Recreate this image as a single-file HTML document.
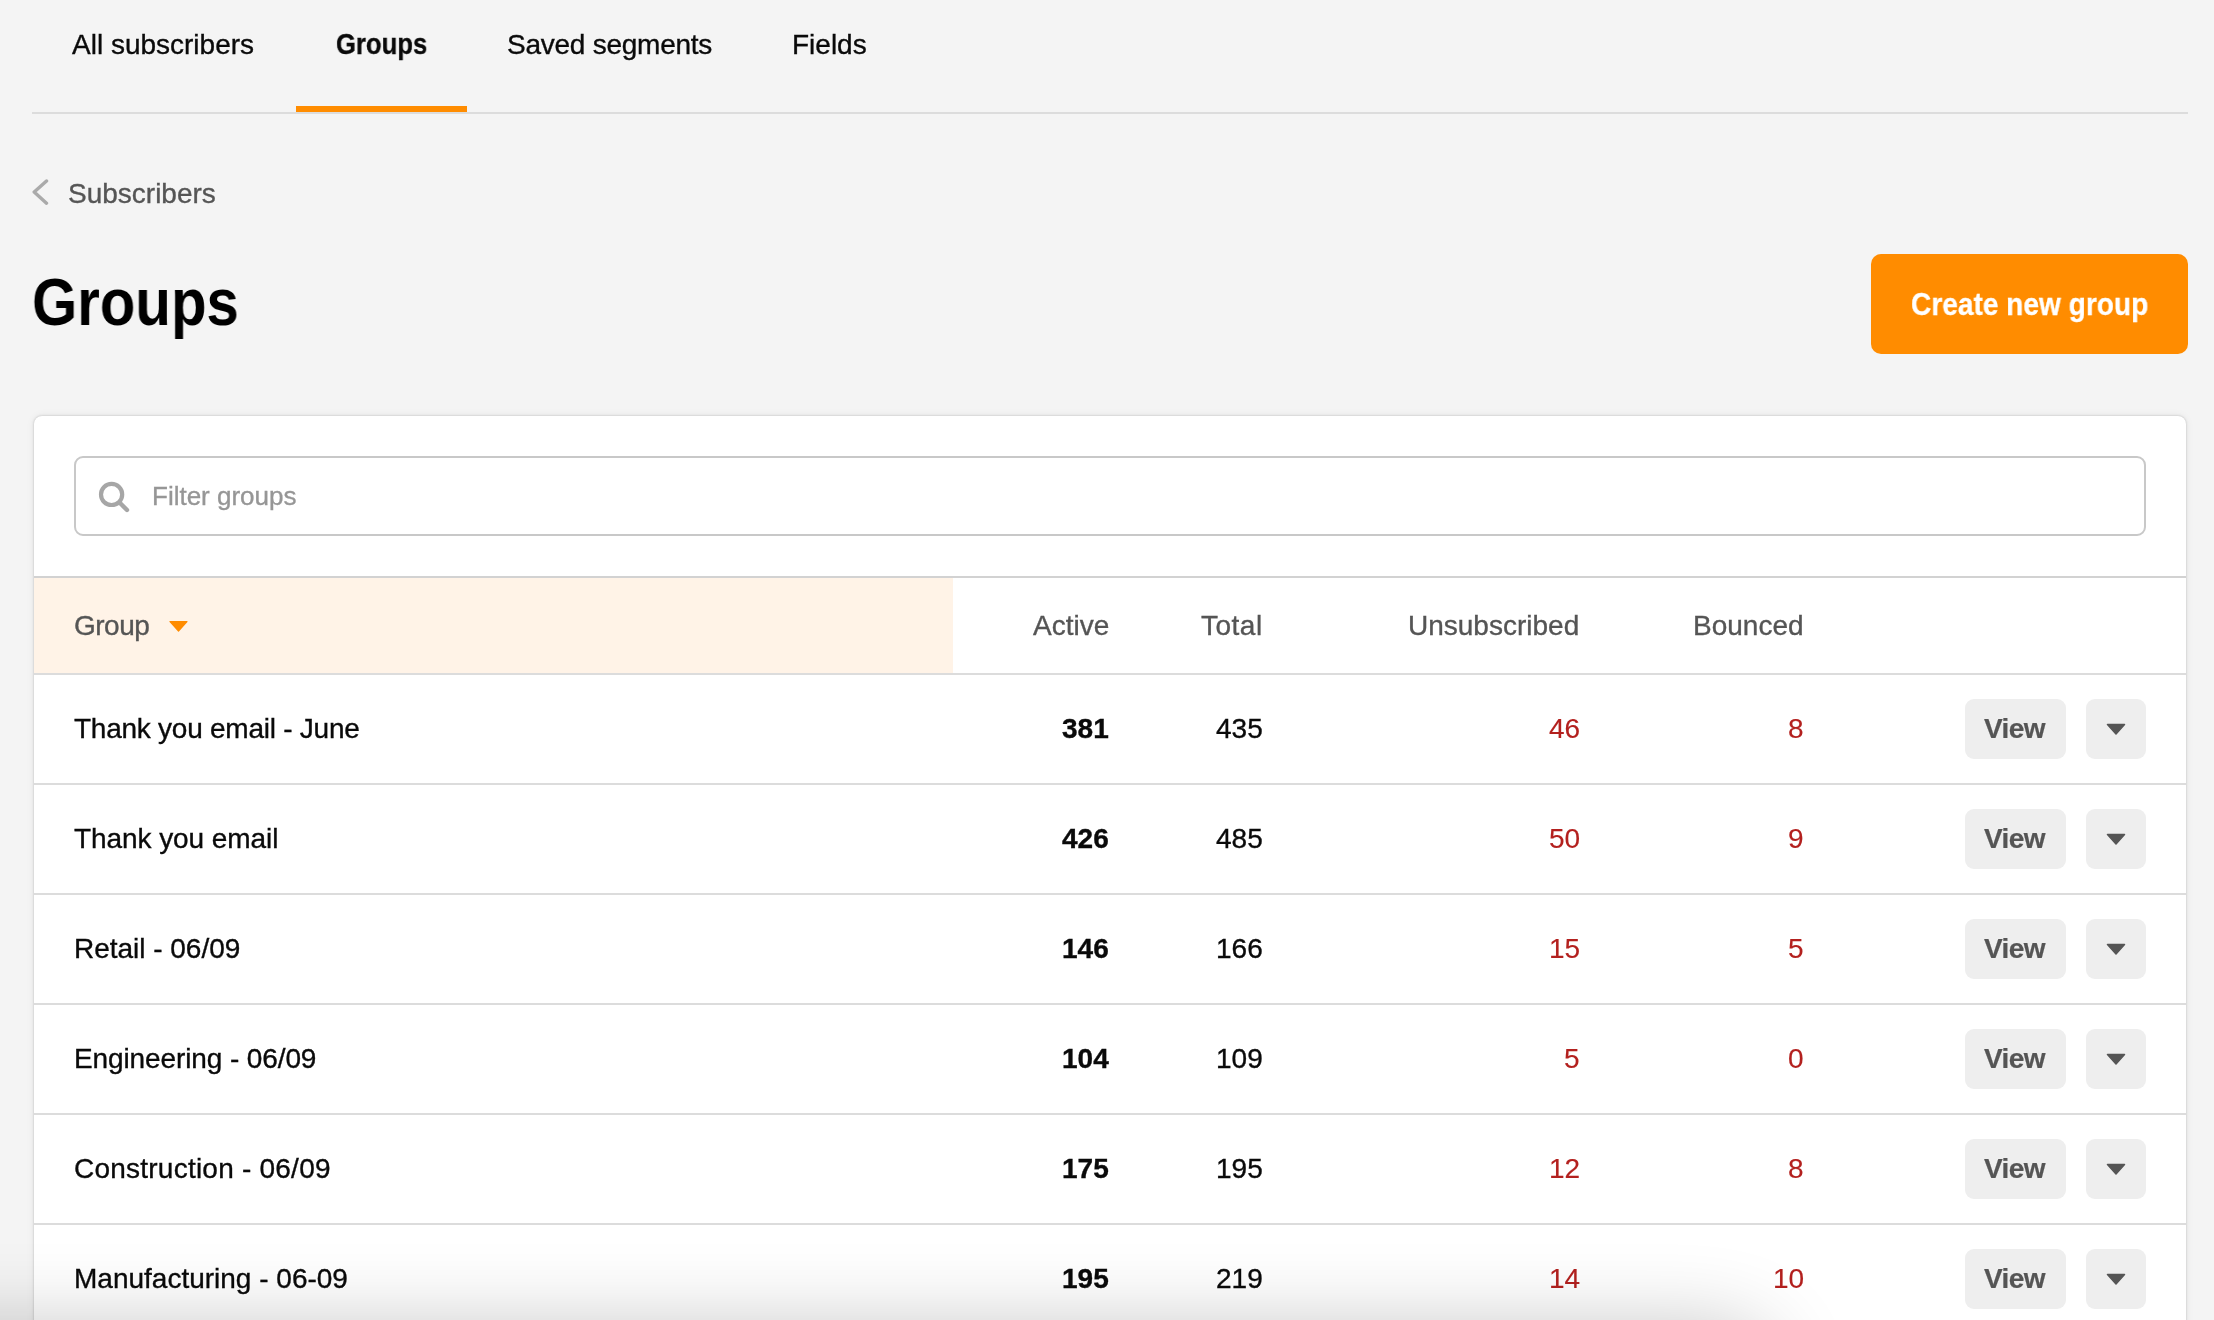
<!DOCTYPE html>
<html>
<head>
<meta charset="utf-8">
<style>
html,body{margin:0;padding:0;}
body{width:2214px;height:1320px;overflow:hidden;background:#f4f4f4;position:relative;font-family:"Liberation Sans",sans-serif;color:#0a0a0a;}
.a{position:absolute;white-space:nowrap;line-height:28px;font-size:28px;will-change:transform;-webkit-text-stroke:0.35px currentColor;}
.tab{top:31px;color:#0a0a0a;}
.line{position:absolute;left:32px;width:2156px;top:112px;height:2px;background:#dcdcdc;}
.bar{position:absolute;left:296px;width:171px;top:106px;height:6px;background:#ff8c00;}
.crumb{top:180px;left:68px;color:#555;}
h1{position:absolute;margin:0;left:32px;top:269px;font-size:66px;line-height:66px;font-weight:bold;color:#000;will-change:transform;transform:scaleX(0.881);transform-origin:0 0;}
.btn{position:absolute;left:1871px;top:254px;width:317px;height:100px;background:#ff8c00;border-radius:10px;color:#fff;font-weight:bold;font-size:30px;}
.btn span{will-change:transform;-webkit-text-stroke:0.3px #fff;position:absolute;left:40px;top:35px;line-height:31px;font-size:31px;transform:scaleX(0.906);transform-origin:0 0;}
.card{position:absolute;left:34px;top:416px;width:2152px;height:1000px;background:#fff;border-radius:8px;box-shadow:0 0 2px rgba(0,0,0,0.2),0 0 4px rgba(0,0,0,0.06),0 0 10px rgba(0,0,0,0.06);}
.search{position:absolute;left:74px;top:456px;width:2068px;height:76px;border:2px solid #c8c8c8;border-radius:9px;background:#fff;}
.ph{top:483px;left:152px;color:#969696;font-size:26px;line-height:26px;}
.hdr{position:absolute;left:34px;top:576px;width:2152px;height:2px;background:#d2d2d2;}
.hbg{position:absolute;left:34px;top:578px;width:919px;height:95px;background:#fff3e7;}
.sep{position:absolute;left:34px;width:2152px;height:2px;background:#dcdcdc;}
.th{color:#555;top:612px;}
.r{text-align:right;}
.num{font-weight:bold;color:#0a0a0a;}
.red{color:#b3201e;-webkit-text-stroke:0.15px currentColor;}
.vbtn{position:absolute;left:1965px;width:101px;height:60px;background:#eeeeee;border-radius:9px;}
.vbtn span{will-change:transform;-webkit-text-stroke:0.2px currentColor;position:absolute;left:19px;top:16px;font-size:28px;line-height:28px;font-weight:bold;color:#555;letter-spacing:-0.6px;}
.dbtn{position:absolute;left:2086px;width:60px;height:60px;background:#eeeeee;border-radius:9px;}
.dbtn svg{position:absolute;left:20px;top:24px;}
.shade{position:absolute;left:-300px;top:1338px;width:2060px;height:300px;border-radius:40px;background:#000;box-shadow:0 0 84px 10px rgba(0,0,0,0.24);pointer-events:none;}
</style>
</head>
<body>
<div class="a tab" style="left:72px;">All subscribers</div>
<div class="a tab" style="left:336px;top:30px;font-size:29px;font-weight:bold;transform:scaleX(0.885);transform-origin:0 0;">Groups</div>
<div class="a tab" style="left:507px;letter-spacing:-0.25px;">Saved segments</div>
<div class="a tab" style="left:792px;">Fields</div>
<div class="line"></div>
<div class="bar"></div>

<svg style="position:absolute;left:32px;top:178px;" width="18" height="28" viewBox="0 0 18 28"><path d="M14.5 3 L2.2 14 L14.5 25.2" fill="none" stroke="#aaa" stroke-width="3.4" stroke-linecap="round" stroke-linejoin="round"/></svg>
<div class="a crumb">Subscribers</div>

<h1>Groups</h1>
<div class="btn"><span>Create new group</span></div>

<div class="card"></div>
<div class="search"></div>
<svg style="position:absolute;left:96px;top:479px;" width="36" height="36" viewBox="0 0 36 36"><circle cx="15.6" cy="15.4" r="10.6" fill="none" stroke="#a6a6a6" stroke-width="4.2"/><path d="M23.5 23.5 L31 31" stroke="#a6a6a6" stroke-width="4.4" stroke-linecap="round"/></svg>
<div class="a ph">Filter groups</div>

<div class="hdr"></div>
<div class="hbg"></div>
<div class="a th" style="left:74px;letter-spacing:-0.5px;">Group</div>
<svg style="position:absolute;left:169px;top:620px;" width="20" height="12" viewBox="0 0 20 12"><path d="M1 1.5 L18 1.5 L9.5 11 Z" fill="#ff8c00" stroke="#ff8c00" stroke-width="1.2" stroke-linejoin="round"/></svg>
<div class="a th r" style="right:1105px;">Active</div>
<div class="a th r" style="right:951px;letter-spacing:0.5px;">Total</div>
<div class="a th r" style="right:635px;">Unsubscribed</div>
<div class="a th r" style="right:410px;">Bounced</div>
<div class="sep" style="top:673px;"></div>

<div class="a" style="left:74px;top:715px;letter-spacing:-0.25px;">Thank you email - June</div>
<div class="a r num" style="right:1105px;top:715px;">381</div>
<div class="a r" style="right:951px;top:715px;">435</div>
<div class="a r red" style="right:634px;top:715px;">46</div>
<div class="a r red" style="right:410px;top:715px;">8</div>
<div class="vbtn" style="top:699px;"><span>View</span></div>
<div class="dbtn" style="top:699px;"><svg width="20" height="12" viewBox="0 0 20 12"><path d="M1.5 1.5 L18.5 1.5 L10 11 Z" fill="#555" stroke="#555" stroke-width="1.5" stroke-linejoin="round"/></svg></div>
<div class="sep" style="top:783px;"></div>
<div class="a" style="left:74px;top:825px;letter-spacing:-0.07px;">Thank you email</div>
<div class="a r num" style="right:1105px;top:825px;">426</div>
<div class="a r" style="right:951px;top:825px;">485</div>
<div class="a r red" style="right:634px;top:825px;">50</div>
<div class="a r red" style="right:410px;top:825px;">9</div>
<div class="vbtn" style="top:809px;"><span>View</span></div>
<div class="dbtn" style="top:809px;"><svg width="20" height="12" viewBox="0 0 20 12"><path d="M1.5 1.5 L18.5 1.5 L10 11 Z" fill="#555" stroke="#555" stroke-width="1.5" stroke-linejoin="round"/></svg></div>
<div class="sep" style="top:893px;"></div>
<div class="a" style="left:74px;top:935px;letter-spacing:-0.02px;">Retail - 06/09</div>
<div class="a r num" style="right:1105px;top:935px;">146</div>
<div class="a r" style="right:951px;top:935px;">166</div>
<div class="a r red" style="right:634px;top:935px;">15</div>
<div class="a r red" style="right:410px;top:935px;">5</div>
<div class="vbtn" style="top:919px;"><span>View</span></div>
<div class="dbtn" style="top:919px;"><svg width="20" height="12" viewBox="0 0 20 12"><path d="M1.5 1.5 L18.5 1.5 L10 11 Z" fill="#555" stroke="#555" stroke-width="1.5" stroke-linejoin="round"/></svg></div>
<div class="sep" style="top:1003px;"></div>
<div class="a" style="left:74px;top:1045px;letter-spacing:-0.11px;">Engineering - 06/09</div>
<div class="a r num" style="right:1105px;top:1045px;">104</div>
<div class="a r" style="right:951px;top:1045px;">109</div>
<div class="a r red" style="right:634px;top:1045px;">5</div>
<div class="a r red" style="right:410px;top:1045px;">0</div>
<div class="vbtn" style="top:1029px;"><span>View</span></div>
<div class="dbtn" style="top:1029px;"><svg width="20" height="12" viewBox="0 0 20 12"><path d="M1.5 1.5 L18.5 1.5 L10 11 Z" fill="#555" stroke="#555" stroke-width="1.5" stroke-linejoin="round"/></svg></div>
<div class="sep" style="top:1113px;"></div>
<div class="a" style="left:74px;top:1155px;letter-spacing:0.23px;">Construction - 06/09</div>
<div class="a r num" style="right:1105px;top:1155px;">175</div>
<div class="a r" style="right:951px;top:1155px;">195</div>
<div class="a r red" style="right:634px;top:1155px;">12</div>
<div class="a r red" style="right:410px;top:1155px;">8</div>
<div class="vbtn" style="top:1139px;"><span>View</span></div>
<div class="dbtn" style="top:1139px;"><svg width="20" height="12" viewBox="0 0 20 12"><path d="M1.5 1.5 L18.5 1.5 L10 11 Z" fill="#555" stroke="#555" stroke-width="1.5" stroke-linejoin="round"/></svg></div>
<div class="sep" style="top:1223px;"></div>
<div class="a" style="left:74px;top:1265px;letter-spacing:0.0px;">Manufacturing - 06-09</div>
<div class="a r num" style="right:1105px;top:1265px;">195</div>
<div class="a r" style="right:951px;top:1265px;">219</div>
<div class="a r red" style="right:634px;top:1265px;">14</div>
<div class="a r red" style="right:410px;top:1265px;">10</div>
<div class="vbtn" style="top:1249px;"><span>View</span></div>
<div class="dbtn" style="top:1249px;"><svg width="20" height="12" viewBox="0 0 20 12"><path d="M1.5 1.5 L18.5 1.5 L10 11 Z" fill="#555" stroke="#555" stroke-width="1.5" stroke-linejoin="round"/></svg></div>
<div class="shade"></div>
</body>
</html>
